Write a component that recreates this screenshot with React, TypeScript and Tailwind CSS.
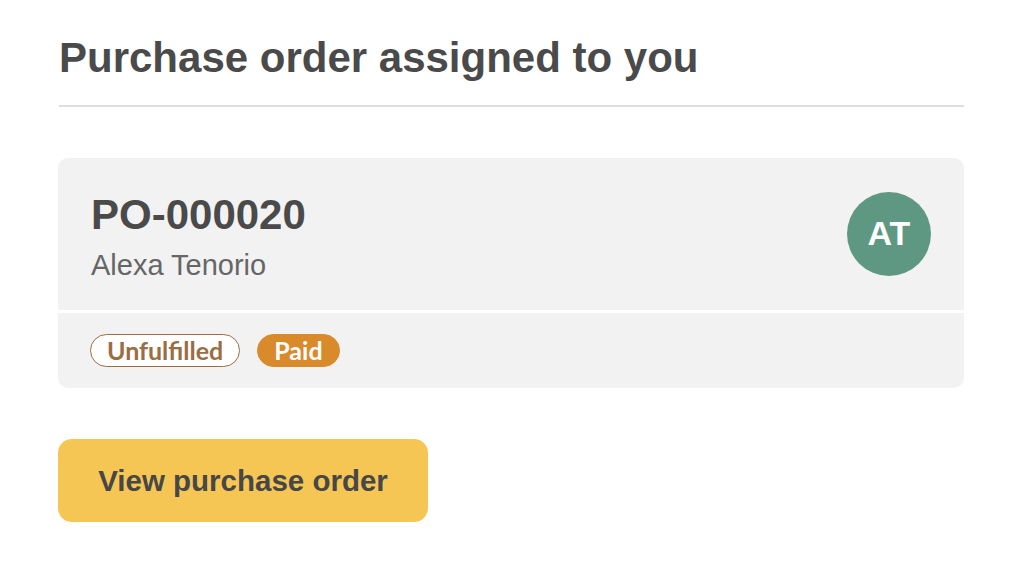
function Badge({ label, filled }: { label: string; filled?: boolean }) {
  return (
    <span
      className={
        filled
          ? "inline-flex h-[33px] items-center rounded-full border-[1.5px] border-[#d98a2b] bg-[#d98a2b] px-[16px] text-[25px] font-bold text-white"
          : "inline-flex h-[33px] items-center rounded-full border-[1.5px] border-[#9b6d43] bg-white px-[16px] text-[25px] font-bold text-[#9b6d43]"
      }
      style={{ fontFamily: "Lato, 'Open Sans', sans-serif" }}
    >
      {label}
    </span>
  );
}

export default function App() {
  return (
    <div
      className="min-h-[571px] w-full bg-white pl-[58px] pr-[60px] pt-[34px] text-[#4a4a4a]"
      style={{ fontFamily: "'Liberation Sans', Arial, sans-serif" }}
    >
      <h1 className="pl-px text-[42px] font-bold leading-[48px]">Purchase order assigned to you</h1>
      <div className="mt-[23px] ml-px h-[2px] bg-[#dedede]" />

      <div className="mt-[51px] overflow-hidden rounded-[10px] bg-[#f2f2f2]">
        <div className="flex items-center justify-between pl-[33px] pr-[33px] pt-[33px] pb-[28px]">
          <div>
            <div className="text-[42px] font-bold leading-[48px] text-[#4a4a4a]">PO-000020</div>
            <div className="mt-[9px] text-[29px] leading-[34px] text-[#666]">Alexa Tenorio</div>
          </div>
          <div className="-mt-[6px] flex h-[84px] w-[84px] items-center justify-center rounded-full bg-[#5f9882] text-[34px] font-bold text-white">
            AT
          </div>
        </div>
        <div className="h-[3px] bg-white" />
        <div className="flex h-[75px] items-center gap-[17px] pl-[32px]">
          <Badge label="Unfulfilled" />
          <Badge label="Paid" filled />
        </div>
      </div>

      <button className="mt-[51px] flex h-[83px] w-[370px] items-center justify-center rounded-[14px] bg-[#f6c655] pt-[2px] text-[29.5px] font-bold text-[#474747]">
        View purchase order
      </button>
    </div>
  );
}
